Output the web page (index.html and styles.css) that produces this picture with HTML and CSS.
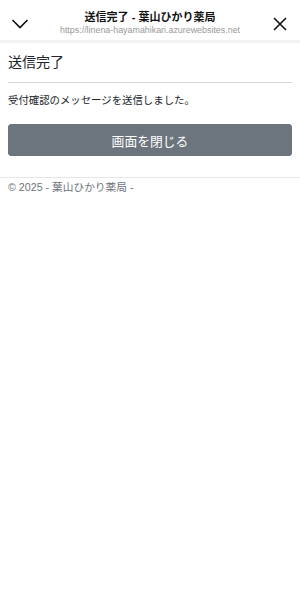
FILE: index.html
```html
<!DOCTYPE html>
<html lang="ja">
  <head>
    <meta charset="UTF-8" />
    <meta name="viewport" content="width=device-width, initial-scale=1.0" />
    <title>送信完了 - 葉山ひかり薬局</title>
    <link rel="stylesheet" href="styles.css">
  </head>
  <body>
    <div class="topbar">
      <svg class="icon" width="20" height="20" viewBox="0 0 20 20">
        <path d="M2.5 6 L10 13.5 L17.5 6" fill="none" stroke="#111" stroke-width="1.6" />
      </svg>
      <div class="topbar-text">
        <div class="topbar-title">送信完了 - 葉山ひかり薬局</div>
        <div class="topbar-url">https://linena-hayamahikari.azurewebsites.net</div>
      </div>
      <svg class="icon" width="20" height="20" viewBox="0 0 20 20">
        <path d="M4 4 L16 16 M16 4 L4 16" fill="none" stroke="#111" stroke-width="1.6" />
      </svg>
    </div>
    <div class="sep"></div>
    <main class="container">
      <h1 class="title">送信完了</h1>
      <hr class="rule" />
      <p class="message">受付確認のメッセージを送信しました。</p>
      <button class="btn-close" onclick="window.close()">画面を閉じる</button>
    </main>
    <footer class="footer">
      <div class="container">© 2025 - 葉山ひかり薬局 -</div>
    </footer>
  </body>
</html>
```

FILE: styles.css
```css
* {
  box-sizing: border-box;
}
body {
  margin: 0;
  background-color: #fff;
  color: #212529;
  font-family: "Liberation Sans", "Noto Sans CJK JP", sans-serif;
}
.topbar {
  height: 40px;
  display: flex;
  align-items: center;
  justify-content: space-between;
  padding: 0 10px;
  background-color: #fff;
}
.icon {
  flex: none;
  margin-top: 8px;
}
.topbar-text {
  text-align: center;
  padding-top: 7px;
}
.topbar-title {
  font-size: 11px;
  font-weight: bold;
  line-height: 13px;
  color: #111;
}
.topbar-url {
  font-size: 8.9px;
  line-height: 12px;
  color: #999;
}
.sep {
  height: 3px;
  background-color: #f3f3f3;
}
.container {
  padding: 0 8px;
}
.title {
  margin: 11px 0 0;
  font-size: 14px;
  font-weight: normal;
  line-height: 1.2;
}
.rule {
  margin: 11px 0 0;
  height: 0;
  border: none;
  border-top: 1px solid #d6d6d6;
}
.message {
  margin: 10px 0 0;
  font-size: 10.4px;
  line-height: 1.5;
}
.btn-close {
  display: block;
  width: 100%;
  height: 32px;
  margin-top: 16px;
  border: 1px solid #6c757d;
  border-radius: 3px;
  background-color: #6c757d;
  color: #fff;
  font-family: "Liberation Sans", "Noto Sans CJK JP", sans-serif;
  font-size: 12.8px;
  cursor: pointer;
}
.footer {
  margin-top: 21px;
  border-top: 1px solid #e6e6e6;
  font-size: 10.7px;
  line-height: 1.5;
  color: #6c757d;
  padding-top: 1px;
}
```
